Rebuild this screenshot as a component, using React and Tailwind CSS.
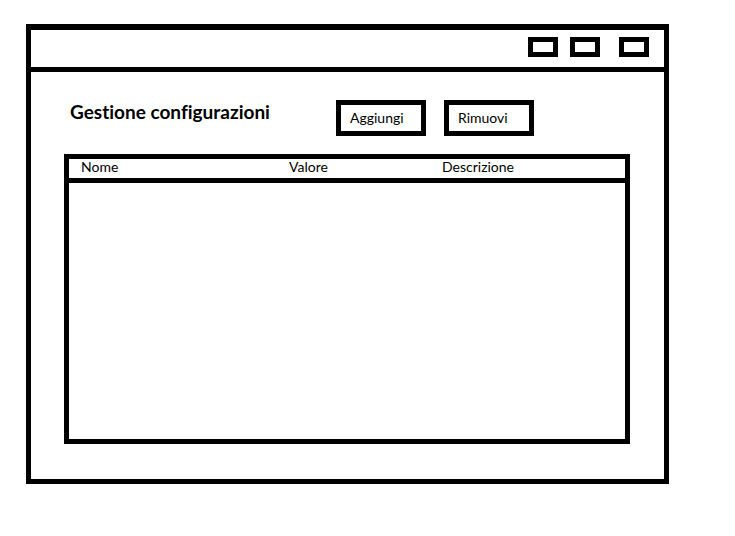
const windowControls = [
  { label: 'Riduci', spacing: 'mr-3' },
  { label: 'Ingrandisci', spacing: 'mr-[19px]' },
  { label: 'Chiudi', spacing: '' },
];

function TitleBar() {
  return (
    <header className="flex h-[42px] items-start justify-end border-b-5 border-black pt-[7px] pr-[15px]">
      {windowControls.map(({ label, spacing }) => (
        <button
          key={label}
          type="button"
          aria-label={label}
          className={`h-5 w-[30px] border-5 border-black ${spacing}`}
        />
      ))}
    </header>
  );
}

function ActionButton({ children }) {
  return (
    <button
      type="button"
      className="flex h-9 w-[90px] items-center border-5 border-black pl-[9px] text-[14px] leading-5"
    >
      {children}
    </button>
  );
}

function ConfigTable() {
  return (
    <div className="mt-[18px] border-5 border-black">
      <table className="w-full table-fixed border-collapse text-left text-[14px] leading-4">
        <thead>
          <tr>
            <th className="w-[208px] p-0 pb-[3px] pl-3 font-normal">Nome</th>
            <th className="w-[153px] p-0 pb-[3px] pl-3 font-normal">Valore</th>
            <th className="p-0 pb-[3px] pl-3 font-normal">Descrizione</th>
          </tr>
        </thead>
      </table>
      <div className="h-[261px] border-t-5 border-black" />
    </div>
  );
}

export default function App() {
  return (
    <div className="min-h-screen bg-white pt-6 pr-[66px] pl-[26px] font-['Lato',sans-serif] text-black [font-variant-ligatures:none]">
      <div className="border-5 border-t-6 border-black">
        <TitleBar />
        <main className="pt-7 pr-[34px] pb-[35px] pl-[33px]">
          <div className="flex">
            <h1 className="w-[272px] pl-1.5 text-[19px] leading-6 font-bold">
              Gestione configurazioni
            </h1>
            <div className="flex gap-[18px]">
              <ActionButton>Aggiungi</ActionButton>
              <ActionButton>Rimuovi</ActionButton>
            </div>
          </div>
          <ConfigTable />
        </main>
      </div>
    </div>
  );
}
